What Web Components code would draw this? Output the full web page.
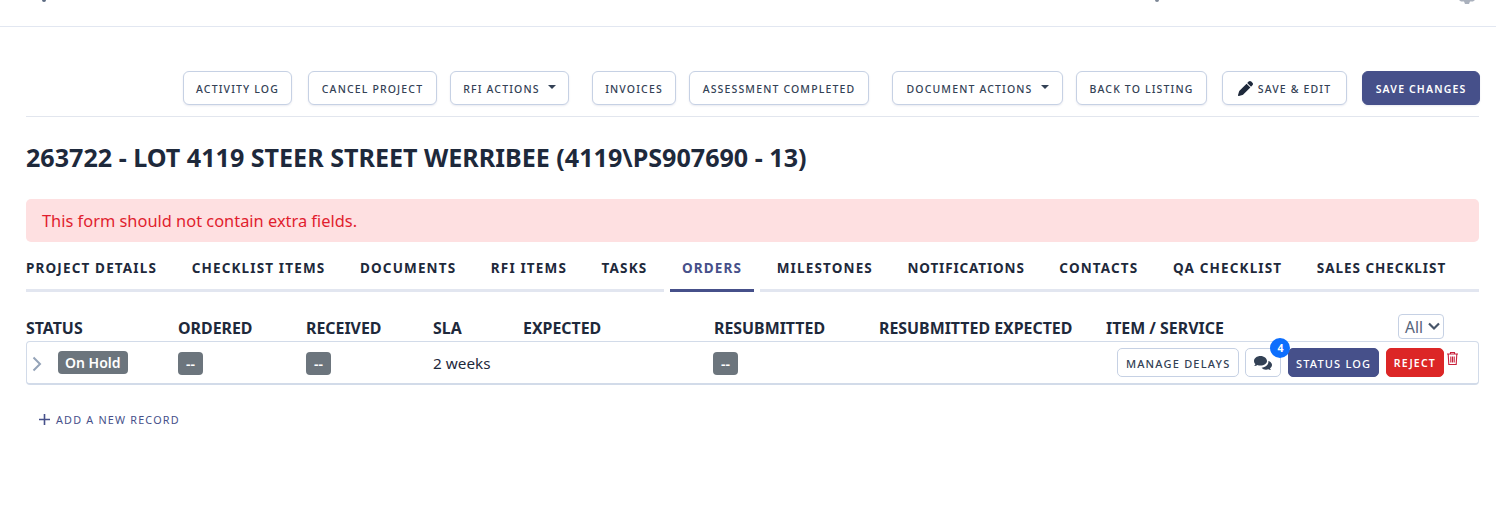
<!DOCTYPE html>
<html>
<head>
<meta charset="utf-8">
<title>Project orders</title>
<style>
  html, body { margin: 0; background: #fff; }
  body { font-family: "Noto Sans", "Open Sans", sans-serif; color: #1e293b; overflow: hidden; }
</style>
</head>
<body>
<top-bar></top-bar>
<project-page>
  <action-bar>
    <ui-btn style="margin-left:auto;width:109px">ACTIVITY LOG</ui-btn>
    <ui-btn style="margin-left:16px;width:129px">CANCEL PROJECT</ui-btn>
    <ui-btn style="margin-left:13px;width:119px" caret>RFI ACTIONS</ui-btn>
    <ui-btn style="margin-left:23px;width:84px">INVOICES</ui-btn>
    <ui-btn style="margin-left:13px;width:180px">ASSESSMENT COMPLETED</ui-btn>
    <ui-btn style="margin-left:23px;width:171px" caret>DOCUMENT ACTIONS</ui-btn>
    <ui-btn style="margin-left:13px;width:131px">BACK TO LISTING</ui-btn>
    <ui-btn style="margin-left:15px;width:125px" pencil>SAVE &amp; EDIT</ui-btn>
    <ui-btn style="margin:0 -1px 0 15px;width:118px" variant="primary">SAVE CHANGES</ui-btn>
  </action-bar>
  <page-title>263722 - LOT 4119 STEER STREET WERRIBEE (4119\PS907690 - 13)</page-title>
  <error-alert>This form should not contain extra fields.</error-alert>
  <tab-bar>
    <tab-item>PROJECT DETAILS</tab-item>
    <tab-item>CHECKLIST ITEMS</tab-item>
    <tab-item>DOCUMENTS</tab-item>
    <tab-item>RFI ITEMS</tab-item>
    <tab-item>TASKS</tab-item>
    <tab-item active>ORDERS</tab-item>
    <tab-item>MILESTONES</tab-item>
    <tab-item style="letter-spacing:.85px">NOTIFICATIONS</tab-item>
    <tab-item>CONTACTS</tab-item>
    <tab-item>QA CHECKLIST</tab-item>
    <tab-item style="letter-spacing:.95px">SALES CHECKLIST</tab-item>
  </tab-bar>
  <orders-table></orders-table>
  <add-record>ADD A NEW RECORD</add-record>
</project-page>

<script>
// shared column widths for the orders head and row
const COLS = '152px 128px 127px 90px 191px 165px 227px 1fr';

class TopBar extends HTMLElement {
  constructor() {
    super();
    this.attachShadow({mode: 'open'}).innerHTML = `
      <style>
        :host { display: flex; height: 26px; border-bottom: 1px solid #e2e7f1; overflow: hidden; }
        i { display: block; height: 2px; width: 4px; border-radius: 0 0 2px 2px; }
        .a { margin-left: 42px; background: #5c6b82; }
        .b { margin-left: 1109px; background: #7d8796; }
        svg { margin-left: 300px; }
      </style>
      <i class="a"></i><i class="b"></i>
      <svg width="16" height="4" viewBox="0 0 16 4"><path fill="#aab1bd" d="M0 0h16l-2 1.500h-3l-1 2.500H6L5 1.500H2z"/></svg>`;
  }
}

class ProjectPage extends HTMLElement {
  constructor() {
    super();
    this.attachShadow({mode: 'open'}).innerHTML = `
      <style>:host { display: block; padding: 0 17px 0 26px; }</style>
      <slot></slot>`;
  }
}

class ActionBar extends HTMLElement {
  constructor() {
    super();
    this.attachShadow({mode: 'open'}).innerHTML = `
      <style>
        :host { display: flex; margin-top: 44px; padding-bottom: 11px; border-bottom: 1px solid #e2e6ee; }
      </style>
      <slot></slot>`;
  }
}

class UiBtn extends HTMLElement {
  constructor() {
    super();
    const caret = this.hasAttribute('caret') ? '<span class="caret"></span>' : '';
    const pencil = this.hasAttribute('pencil')
      ? '<svg width="15" height="15" viewBox="0 0 512 512"><path fill="#1e293b" d="M362.7 19.3L314.3 67.7 444.3 197.7l48.4-48.4c25-25 25-65.5 0-90.5L453.3 19.3c-25-25-65.5-25-90.6 0zM291.7 90.3L58.6 323.5c-10.400 10.400-18 23.300-22.200 37.400L1 481.200c-2.500 8.500-.2 17.600 6 23.800s15.300 8.500 23.700 6.100l120.300-35.400c14.100-4.200 27-11.800 37.400-22.200L421.700 220.300 291.700 90.300z"/></svg>'
      : '';
    this.attachShadow({mode: 'open'}).innerHTML = `
      <style>
        :host { display: inline-flex; flex: none; }
        button {
          display: flex; align-items: center; justify-content: center; gap: 5px;
          width: 100%; height: 34px; padding: 2px 0 0; box-sizing: border-box;
          font: 500 10.5px "Noto Sans", "Open Sans", sans-serif; letter-spacing: 1.15px;
          color: #334155; background: #fff; white-space: nowrap;
          border: 1px solid #c6d1e4; border-radius: 6px;
          box-shadow: 0 1px 2px rgba(71, 85, 130, .12);
        }
        :host([variant="primary"]) button { background: #46508a; border-color: #46508a; color: #fff; font-weight: 600; letter-spacing: 1.15px; }
        .caret { margin: -4px 0 0 3px; border: 4px solid transparent; border-top: 4.5px solid #334155; border-bottom: 0; width: 0; height: 0; }
        svg { margin-top: -2px; }
      </style>
      <button>${pencil}<span><slot></slot></span>${caret}</button>`;
  }
}

class PageTitle extends HTMLElement {
  constructor() {
    super();
    this.attachShadow({mode: 'open'}).innerHTML = `
      <style>
        :host { display: block; margin-top: 24px; font-size: 25.1px; line-height: 32px; font-weight: 700; color: #1e293b; white-space: nowrap; }
      </style>
      <slot></slot>`;
  }
}

class ErrorAlert extends HTMLElement {
  constructor() {
    super();
    this.attachShadow({mode: 'open'}).innerHTML = `
      <style>
        :host { display: block; margin-top: 26px; height: 43px; line-height: 43px; padding-left: 16px; font-size: 16.4px; color: #e11d2e; background: #fee0e1; border-radius: 5px; }
      </style>
      <slot></slot>`;
  }
}

class TabBar extends HTMLElement {
  constructor() {
    super();
    this.attachShadow({mode: 'open'}).innerHTML = `
      <style>
        :host { display: flex; margin-top: 8px; height: 42px; box-sizing: border-box; border-bottom: 3px solid #e2e6f0; }
      </style>
      <slot></slot>`;
  }
}

class TabItem extends HTMLElement {
  constructor() {
    super();
    this.attachShadow({mode: 'open'}).innerHTML = `
      <style>
        :host { display: block; height: 42px; box-sizing: border-box; padding: 0 12px; margin-right: 10.6px; line-height: 36px; font-size: 13.5px; font-weight: 700; letter-spacing: 1.15px; color: #1e293b; white-space: nowrap; }
        :host(:first-child) { padding-left: 0; }
        :host([active]) { color: #46508a; border-bottom: 3px solid #46508a; box-shadow: -6px 0 0 #fff, 6px 0 0 #fff; }
      </style>
      <slot></slot>`;
  }
}

class StatusPill extends HTMLElement {
  constructor() {
    super();
    this.attachShadow({mode: 'open'}).innerHTML = `
      <style>
        :host { display: inline-block; padding: 0 7px; height: 23px; line-height: 23px; font-size: 14px; font-weight: 600; color: #fff; background: #6c757d; border-radius: 4px; }
      </style>
      <slot></slot>`;
  }
}

class OrdersTable extends HTMLElement {
  constructor() {
    super();
    this.attachShadow({mode: 'open'}).innerHTML = `
      <style>
        :host { display: block; margin-top: 23px; font-size: 14px; }
        .head { display: grid; grid-template-columns: ${COLS}; align-items: center; height: 25px; font-weight: 700; color: #1e293b; font-size: 15.9px; white-space: nowrap; }
        .row {
          position: relative; display: grid; grid-template-columns: ${COLS}; align-items: center;
          height: 44px; box-sizing: border-box; margin-top: 1px;
          border: 1px solid #d2dbe9; border-bottom-width: 2px; border-radius: 4px;
        }
        .row > div { margin-left: -1px; }
        .row > .first { position: relative; margin-left: 0; padding-left: 31px; }
        .row svg.chev { position: absolute; left: 5px; top: 5px; }
        .dash { padding: 0 8px; margin-top: 2px; }
        .sla { font-size: 15.3px; color: #1e293b; }
        .row > .actions { position: absolute; right: 34px; top: 6px; display: flex; align-items: center; margin: 0; }
        .small { display: flex; align-items: center; height: 29px; box-sizing: border-box; padding: 1px 8px 0; font-size: 11px; letter-spacing: 1.2px; font-weight: 500; border: 1px solid #c6d1e4; border-radius: 5px; color: #334155; background: #fff; white-space: nowrap; }
        .chat { position: relative; margin-left: 6px; width: 36px; justify-content: center; padding: 0; }
        .count { position: absolute; right: -10px; top: -11px; width: 20px; height: 20px; line-height: 20px; text-align: center; border-radius: 50%; background: #0d6efd; color: #fff; font-size: 10.5px; font-weight: 700; letter-spacing: 0; }
        .log { margin-left: 7px; background: #46508a; border-color: #46508a; color: #fff; padding: 1px 6.500px 0; }
        .reject { margin-left: 7px; background: #dc2626; border-color: #dc2626; color: #fff; padding: 1px 7px 0; font-size: 10.5px; font-weight: 600; }
        .trash { position: absolute; right: -15px; top: 3px; }
      </style>
      <div class="head">
        <div>STATUS</div><div>ORDERED</div><div>RECEIVED</div><div>SLA</div><div>EXPECTED</div><div>RESUBMITTED</div><div>RESUBMITTED EXPECTED</div>
        <div style="display:flex;justify-content:space-between;align-items:center">ITEM / SERVICE<select-all style="margin:-2px 35px 0 0"></select-all></div>
      </div>
      <div class="row">
        <div class="first">
          <svg class="chev" width="10" height="16" viewBox="0 0 10 16"><path d="M1.500 1.500L8 8l-6.500 6.500" fill="none" stroke="#94a3b8" stroke-width="2"/></svg>
          <status-pill>On Hold</status-pill>
        </div>
        <div><status-pill class="dash">--</status-pill></div>
        <div><status-pill class="dash">--</status-pill></div>
        <div class="sla">2 weeks</div>
        <div></div>
        <div style="margin-left:-2px"><status-pill class="dash">--</status-pill></div>
        <div></div>
        <div></div>
        <div class="actions">
          <div class="small">MANAGE DELAYS</div>
          <div class="small chat">
            <svg width="20" height="16" viewBox="0 0 20 16"><path fill="#334155" d="M7.500 1C3.900 1 1 3.200 1 6c0 1.200.5 2.200 1.400 3.100-.3.900-1 1.700-1.200 1.900.9 0 2.300-.4 3.200-1 .9.400 1.900.6 3.100.6 3.600 0 6.500-2.200 6.500-4.600S11.100 1 7.500 1z"/><path fill="#334155" d="M19 10c0-1.800-1.500-3.400-3.700-4 .1.300.1.600.1 1 0 3-3 5.400-6.800 5.700.9 1.200 2.600 2 4.400 2 .8 0 1.600-.1 2.300-.4.700.4 1.800.7 2.700.7-.2-.2-.8-1-1-1.700.9-.7 2-1.900 2-3.300z"/></svg>
            <span class="count">4</span>
          </div>
          <div class="small log">STATUS LOG</div>
          <div class="small reject">REJECT</div>
          <svg class="trash" width="13" height="15" viewBox="0 0 13 15"><path fill="none" stroke="#c8203a" stroke-width="1.100" d="M1 3h11M4.500 3V1.500h4V3M2.200 3l.6 10.500h7.400L10.800 3M4.800 5.500v6M6.500 5.500v6M8.200 5.500v6"/></svg>
        </div>
      </div>`;
  }
}

class SelectAll extends HTMLElement {
  constructor() {
    super();
    this.attachShadow({mode: 'open'}).innerHTML = `
      <style>
        :host { display: flex; align-items: center; gap: 5px; width: 46px; height: 25px; box-sizing: border-box; padding-left: 6px; border: 1px solid #c6d1e4; border-radius: 4px; font-size: 15.5px; font-weight: 400; color: #56647a; background: #fff; }
      </style>
      All<svg width="12" height="9" viewBox="0 0 12 9"><path d="M1 1.500l5 5 5-5" fill="none" stroke="#475569" stroke-width="2.200"/></svg>`;
  }
}

class AddRecord extends HTMLElement {
  constructor() {
    super();
    this.attachShadow({mode: 'open'}).innerHTML = `
      <style>
        :host { display: flex; align-items: center; gap: 6px; margin: 24px 0 0 13px; height: 20px; font-size: 10.8px; letter-spacing: 1.2px; font-weight: 400; color: #46508a; }
      </style>
      <svg width="11" height="11" viewBox="0 0 11 11"><path d="M5.500 0v11M0 5.500h11" stroke="#46508a" stroke-width="1.600"/></svg><span><slot></slot></span>`;
  }
}

customElements.define('top-bar', TopBar);
customElements.define('project-page', ProjectPage);
customElements.define('action-bar', ActionBar);
customElements.define('ui-btn', UiBtn);
customElements.define('page-title', PageTitle);
customElements.define('error-alert', ErrorAlert);
customElements.define('tab-bar', TabBar);
customElements.define('tab-item', TabItem);
customElements.define('status-pill', StatusPill);
customElements.define('select-all', SelectAll);
customElements.define('orders-table', OrdersTable);
customElements.define('add-record', AddRecord);
</script>
</body>
</html>
